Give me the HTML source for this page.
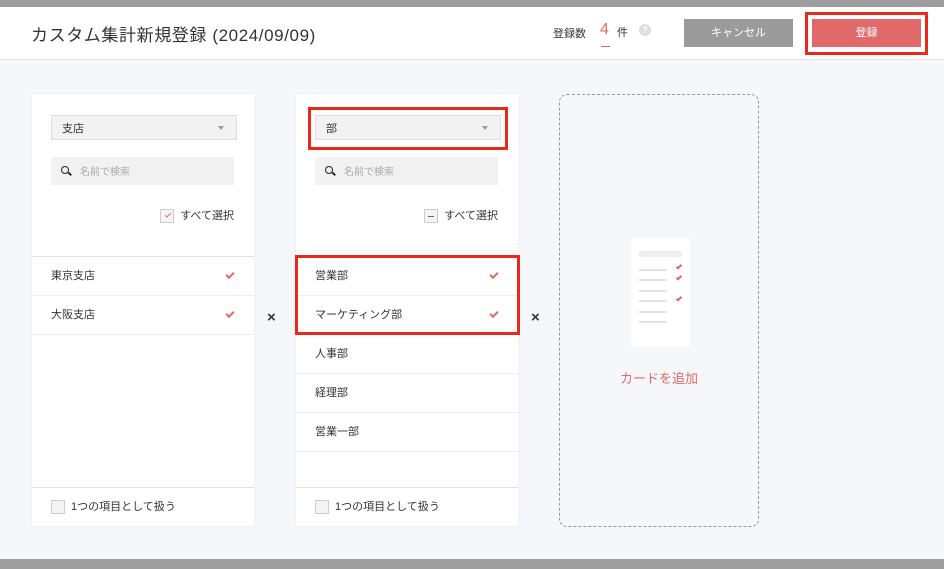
<!DOCTYPE html>
<html><head><meta charset="utf-8"><style>
*{box-sizing:border-box;margin:0;padding:0}
body{width:944px;height:569px;overflow:hidden;background:#f6f7fa;font-family:"Liberation Sans","Noto Sans CJK JP",sans-serif;position:relative;color:#333}
.a{position:absolute}
.top{left:0;top:0;width:944px;height:7px;background:#9e9e9e}
.hdr{left:0;top:7px;width:944px;height:53px;background:#fff;border-bottom:1px solid #e3e3e3}
.card{background:#fff;top:94px;width:222px;height:432px;box-shadow:0 0 2px rgba(0,0,0,.08)}
.sel{left:19px;top:21px;width:186px;height:25px;background:#f2f2f2;border:1px solid #ddd;font-size:11px;padding:4px 10px}
.sel:after{content:"";position:absolute;right:12px;top:10px;border:3px solid transparent;border-top:4px solid #999}
.srch{left:19px;top:63px;width:183px;height:28px;background:#f2f2f2;font-size:10px;color:#aaa;padding:6px 0 0 29px}
.srch i{position:absolute;left:10px;top:9px;width:8px;height:8px;border:1.5px solid #222;border-radius:50%}
.srch i:after{content:"";position:absolute;left:6px;top:6px;width:4px;height:1.5px;background:#222;transform:rotate(45deg)}
.all{right:20px;top:113px;font-size:11px}
.cb{display:inline-block;width:14px;height:14px;border:1px solid #ccc;background:#f4f4f4;vertical-align:middle;margin-right:6px;position:relative}
.row{left:0;width:222px;height:39px;border-bottom:1px solid #eee;font-size:11px;padding:10px 0 0 19px}
.ck{position:absolute;right:20px;top:15px;width:8px;height:5px;border-left:2px solid #e06a6a;border-bottom:2px solid #e06a6a;transform:rotate(-45deg)}
.foot{left:0;top:393px;width:222px;border-top:1px solid #e3e3e3;height:39px;font-size:11px;padding:10px 0 0 19px}
.red{border:3px solid #e8291c}
.x{font-size:15px;font-weight:bold;color:#333}
.ln{position:absolute;left:8px;width:28px;height:2px;background:#e2e2e2}
</style></head><body>
<div class="a top"></div>
<div class="a hdr">
<div class="a" style="left:31px;top:14px;font-size:17px;color:#333;letter-spacing:.6px">カスタム集計新規登録 (2024/09/09)</div>
<div class="a" style="left:553px;top:18px;font-size:11px">登録数</div>
<div class="a" style="left:600px;top:14px;font-size:16px;color:#e06a6a">4</div>
<div class="a" style="left:601px;top:39px;width:9px;height:1px;background:#e06a6a"></div>
<div class="a" style="left:617px;top:17px;font-size:11px">件</div>
<div class="a" style="left:639px;top:17px;width:12px;height:12px;border-radius:50%;background:#ddd;color:#fff;font-size:9px;text-align:center;line-height:12px;font-weight:bold">?</div>
<div class="a" style="left:684px;top:12px;width:109px;height:28px;background:#9b9b9b;color:#fff;font-size:11px;text-align:center;line-height:28px">キャンセル</div>
<div class="a" style="left:812px;top:12px;width:109px;height:28px;background:#e06a6a;color:#fff;font-size:11px;text-align:center;line-height:28px">登録</div>
<div class="a red" style="left:805px;top:5px;width:123px;height:43px"></div>
</div>

<div class="a card" style="left:32px">
<div class="a sel">支店</div>
<div class="a srch"><i></i>名前で検索</div>
<div class="a all"><span class="cb"><span class="ck" style="right:2px;top:3px;width:6px;height:3px;border-width:1px"></span></span>すべて選択</div>
<div class="a" style="left:0;top:162px;width:222px;border-top:1px solid #e3e3e3"></div>
<div class="a row" style="top:163px">東京支店<span class="ck"></span></div>
<div class="a row" style="top:202px">大阪支店<span class="ck"></span></div>
<div class="a foot"><span class="cb"></span>1つの項目として扱う</div>
</div>
<div class="a x" style="left:267px;top:309px">×</div>

<div class="a card" style="left:296px">
<div class="a sel">部</div>
<div class="a srch"><i></i>名前で検索</div>
<div class="a all"><span class="cb"><span style="position:absolute;left:3px;top:6px;width:6px;height:1px;background:#666"></span></span>すべて選択</div>
<div class="a" style="left:0;top:162px;width:222px;border-top:1px solid #e3e3e3"></div>
<div class="a row" style="top:163px">営業部<span class="ck"></span></div>
<div class="a row" style="top:202px">マーケティング部<span class="ck"></span></div>
<div class="a row" style="top:241px">人事部</div>
<div class="a row" style="top:280px">経理部</div>
<div class="a row" style="top:319px">営業一部</div>
<div class="a foot"><span class="cb"></span>1つの項目として扱う</div>
</div>
<div class="a red" style="left:308px;top:107px;width:200px;height:43px"></div>
<div class="a red" style="left:295px;top:255px;width:225px;height:80px"></div>
<div class="a x" style="left:531px;top:309px">×</div>

<div class="a" style="left:559px;top:94px;width:200px;height:433px;border:1px dashed #999;border-radius:8px"></div>
<div class="a" style="left:631px;top:238px;width:59px;height:109px;background:#fff;border-radius:2px">
<div class="a" style="left:8px;top:13px;width:43px;height:6px;background:#eee;border-radius:2px"></div>
<div class="ln" style="top:31px"></div><div class="ln" style="top:41px"></div><div class="ln" style="top:52px"></div><div class="ln" style="top:62px"></div><div class="ln" style="top:73px"></div><div class="ln" style="top:83px"></div>
<span class="ck" style="right:8px;top:27px;width:6px;height:3px"></span>
<span class="ck" style="right:8px;top:38px;width:6px;height:3px"></span>
<span class="ck" style="right:8px;top:59px;width:6px;height:3px"></span>
</div>
<div class="a" style="left:559px;top:368px;width:200px;text-align:center;font-size:13px;color:#e06a6a">カードを追加</div>
<div class="a" style="left:0;top:559px;width:944px;height:10px;background:#9e9e9e"></div>
</body></html>
